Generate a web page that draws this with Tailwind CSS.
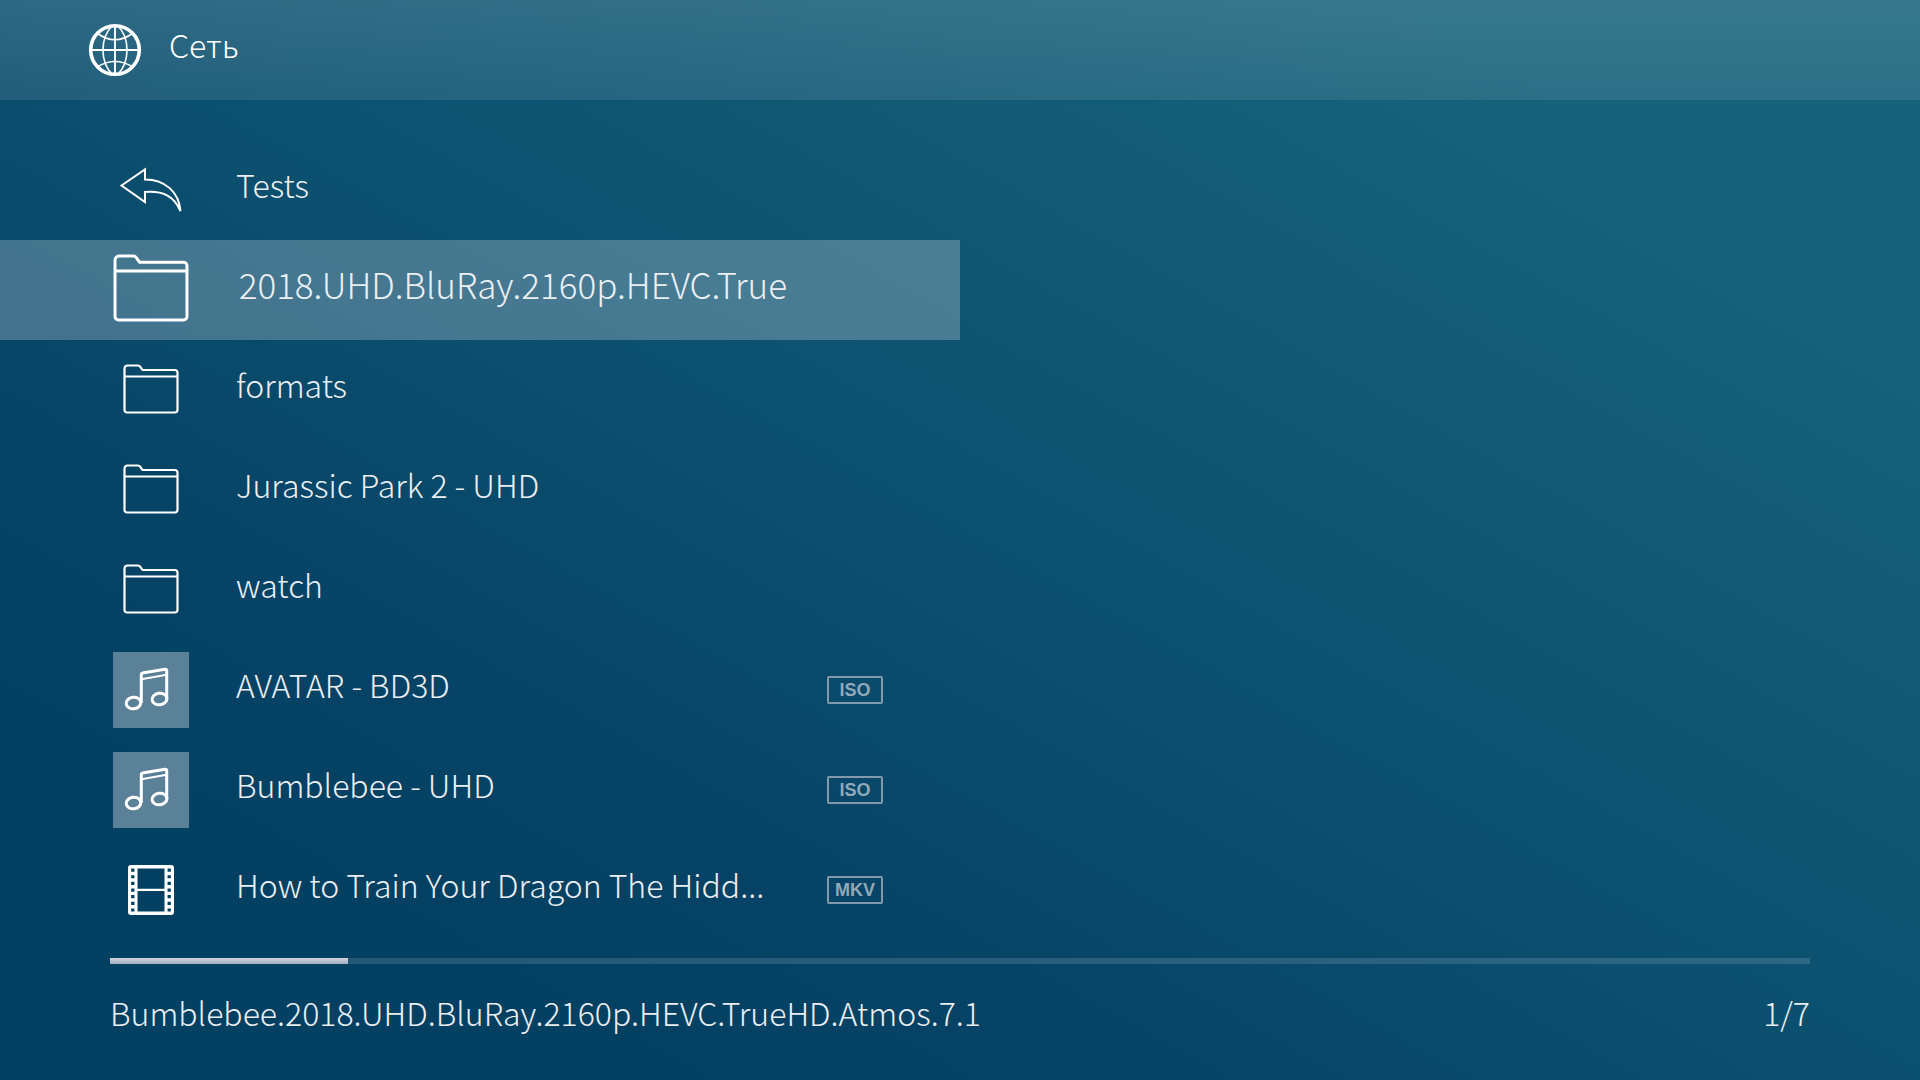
<!DOCTYPE html>
<html lang="ru">
<head>
  <meta charset="UTF-8">
  <meta name="viewport" content="width=device-width, initial-scale=1.0">
  <script src="https://cdn.jsdelivr.net/npm/@tailwindcss/browser@4"></script>
  <title>Сеть</title>
</head>
<body class="min-h-screen flex flex-col bg-[#04405f] bg-[linear-gradient(to_top_right,#034061_0%,#034061_18%,#064366_29%,#0c506f_50%,#125a76_70%,#16627b_86%,#16627b_100%)] font-['Noto_Sans_CJK_SC',sans-serif] font-light text-[32px] leading-10 text-[#eceff2]">

<svg class="hidden">
  <symbol id="folder" viewBox="0 0 56 50">
    <path d="M1.5 4.5a3 3 0 0 1 3-3H15c1 0 1.800.4 2.300 1.300L19.500 6H52a2.500 2.500 0 0 1 2.500 2.500V46a2.500 2.500 0 0 1-2.500 2.500H4A2.500 2.500 0 0 1 1.500 46ZM1.500 12.500H54.500" fill="none" stroke="white" stroke-width="2.200" stroke-linejoin="round"/>
  </symbol>
  <symbol id="note" viewBox="0 0 76 76">
    <g fill="none" stroke="white" stroke-width="3" stroke-linejoin="round">
      <ellipse cx="20.500" cy="51" rx="7.300" ry="5.800" transform="rotate(-8 20.500 51)"/>
      <ellipse cx="46.500" cy="47" rx="7.500" ry="5.800" transform="rotate(-8 46.500 47)"/>
      <path d="M28.300 51V22.500Q28.300 21.200 29.500 21L52 17.300Q53.700 17 53.700 18.500V47"/>
      <path d="M28.300 27.300L53.700 22.800" stroke-width="2"/>
    </g>
  </symbol>
</svg>

<header class="h-25 flex items-center pl-[87px] gap-[26px] bg-linear-to-b from-white/14 to-white/9 text-white">
  <svg class="w-14 h-14" viewBox="-28 -28 56 56" fill="none" stroke="white">
    <circle r="24.300" stroke-width="3.600"/>
    <path d="M0-25V25M-25 0H25" stroke-width="1.900"/>
    <path d="M-3-24C-15-12-15 12-3 24M3-24C15-12 15 12 3 24M-18-17Q0-3.500 18-17M-18 17Q0 6 18 17" stroke-width="1.600"/>
  </svg>
  <h1 class="pb-3">Сеть</h1>
</header>

<main class="pt-10">
  <ul>
    <li>
      <button class="w-1/2 h-25 pl-[113px] pr-[77px] flex items-center gap-[47px] text-left">
        <span class="w-19 shrink-0 flex justify-center">
          <svg class="w-16 h-12" viewBox="0 0 64 48"><path d="M2.500 19.500L26 3.500V13.500C46 13.500 60 26 61.500 45C55 30 44 24.500 26 26V36Z" fill="none" stroke="white" stroke-width="2"/></svg>
        </span>
        <span class="flex-1 pb-3">Tests</span>
      </button>
    </li>
    <li>
      <button class="w-1/2 h-25 pl-[113px] pr-[77px] flex items-center gap-[47px] text-left bg-white/24 text-[35px]" aria-current="true">
        <svg class="w-19 h-17 mb-1 shrink-0"><use href="#folder"/></svg>
        <span class="flex-1 min-w-0 pb-3 pr-24">
          <span class="flex justify-end py-2 overflow-hidden whitespace-nowrap">2018.UHD.BluRay.2160p.HEVC.True</span>
        </span>
      </button>
    </li>
    <li>
      <button class="w-1/2 h-25 pl-[113px] pr-[77px] flex items-center gap-[47px] text-left">
        <span class="w-19 shrink-0 flex justify-center"><svg class="w-14 h-[50px] mb-0.5"><use href="#folder"/></svg></span>
        <span class="flex-1 pb-3">formats</span>
      </button>
    </li>
    <li>
      <button class="w-1/2 h-25 pl-[113px] pr-[77px] flex items-center gap-[47px] text-left">
        <span class="w-19 shrink-0 flex justify-center"><svg class="w-14 h-[50px] mb-0.5"><use href="#folder"/></svg></span>
        <span class="flex-1 pb-3">Jurassic Park 2 - UHD</span>
      </button>
    </li>
    <li>
      <button class="w-1/2 h-25 pl-[113px] pr-[77px] flex items-center gap-[47px] text-left">
        <span class="w-19 shrink-0 flex justify-center"><svg class="w-14 h-[50px] mb-0.5"><use href="#folder"/></svg></span>
        <span class="flex-1 pb-3">watch</span>
      </button>
    </li>
    <li>
      <button class="w-1/2 h-25 pl-[113px] pr-[77px] flex items-center gap-[47px] text-left">
        <svg class="w-19 h-19 shrink-0 bg-[#5b8199]"><use href="#note"/></svg>
        <span class="flex-1 pb-3">AVATAR - BD3D</span>
        <span class="w-14 h-7 flex items-center justify-center border-2 rounded-xs border-[#8199ab] text-[#93a8b7] font-['Liberation_Sans',sans-serif] font-bold text-lg leading-none">ISO</span>
      </button>
    </li>
    <li>
      <button class="w-1/2 h-25 pl-[113px] pr-[77px] flex items-center gap-[47px] text-left">
        <svg class="w-19 h-19 shrink-0 bg-[#5b8199]"><use href="#note"/></svg>
        <span class="flex-1 pb-3">Bumblebee - UHD</span>
        <span class="w-14 h-7 flex items-center justify-center border-2 rounded-xs border-[#8199ab] text-[#93a8b7] font-['Liberation_Sans',sans-serif] font-bold text-lg leading-none">ISO</span>
      </button>
    </li>
    <li>
      <button class="w-1/2 h-25 pl-[113px] pr-[77px] flex items-center gap-[47px] text-left">
        <span class="w-19 shrink-0 flex justify-center">
          <svg class="w-12 h-13" viewBox="0 0 48 52">
            <path fill="white" fill-rule="evenodd" d="M4 1H44a3 3 0 0 1 3 3V48a3 3 0 0 1-3 3H4a3 3 0 0 1-3-3V4a3 3 0 0 1 3-3ZM10.500 4.500V24.800H37.500V4.500ZM10.500 27V47.500H37.500V27Z"/>
            <path stroke="#04405f" stroke-width="3.300" stroke-dasharray="3.200 3.450" d="M5.800 4.500V48M42.200 4.500V48"/>
          </svg>
        </span>
        <span class="flex-1 pb-3 whitespace-nowrap">How to Train Your Dragon The Hidd...</span>
        <span class="w-14 h-7 flex items-center justify-center border-2 rounded-xs border-[#8199ab] text-[#93a8b7] font-['Liberation_Sans',sans-serif] font-bold text-lg leading-none">MKV</span>
      </button>
    </li>
  </ul>
</main>

<footer class="pt-[18px] px-[110px]">
  <div class="h-1.5 bg-white/13" role="progressbar" aria-valuenow="14" aria-valuemin="0" aria-valuemax="100" aria-label="1/7">
    <div class="h-full bg-linear-to-b from-[#d2d5de] to-[#a3adbf]" style="width: 14%"></div>
  </div>
  <div class="mt-7 flex justify-between">
    <p>Bumblebee.2018.UHD.BluRay.2160p.HEVC.TrueHD.Atmos.7.1</p>
    <p>1/7</p>
  </div>
</footer>
</body>
</html>
